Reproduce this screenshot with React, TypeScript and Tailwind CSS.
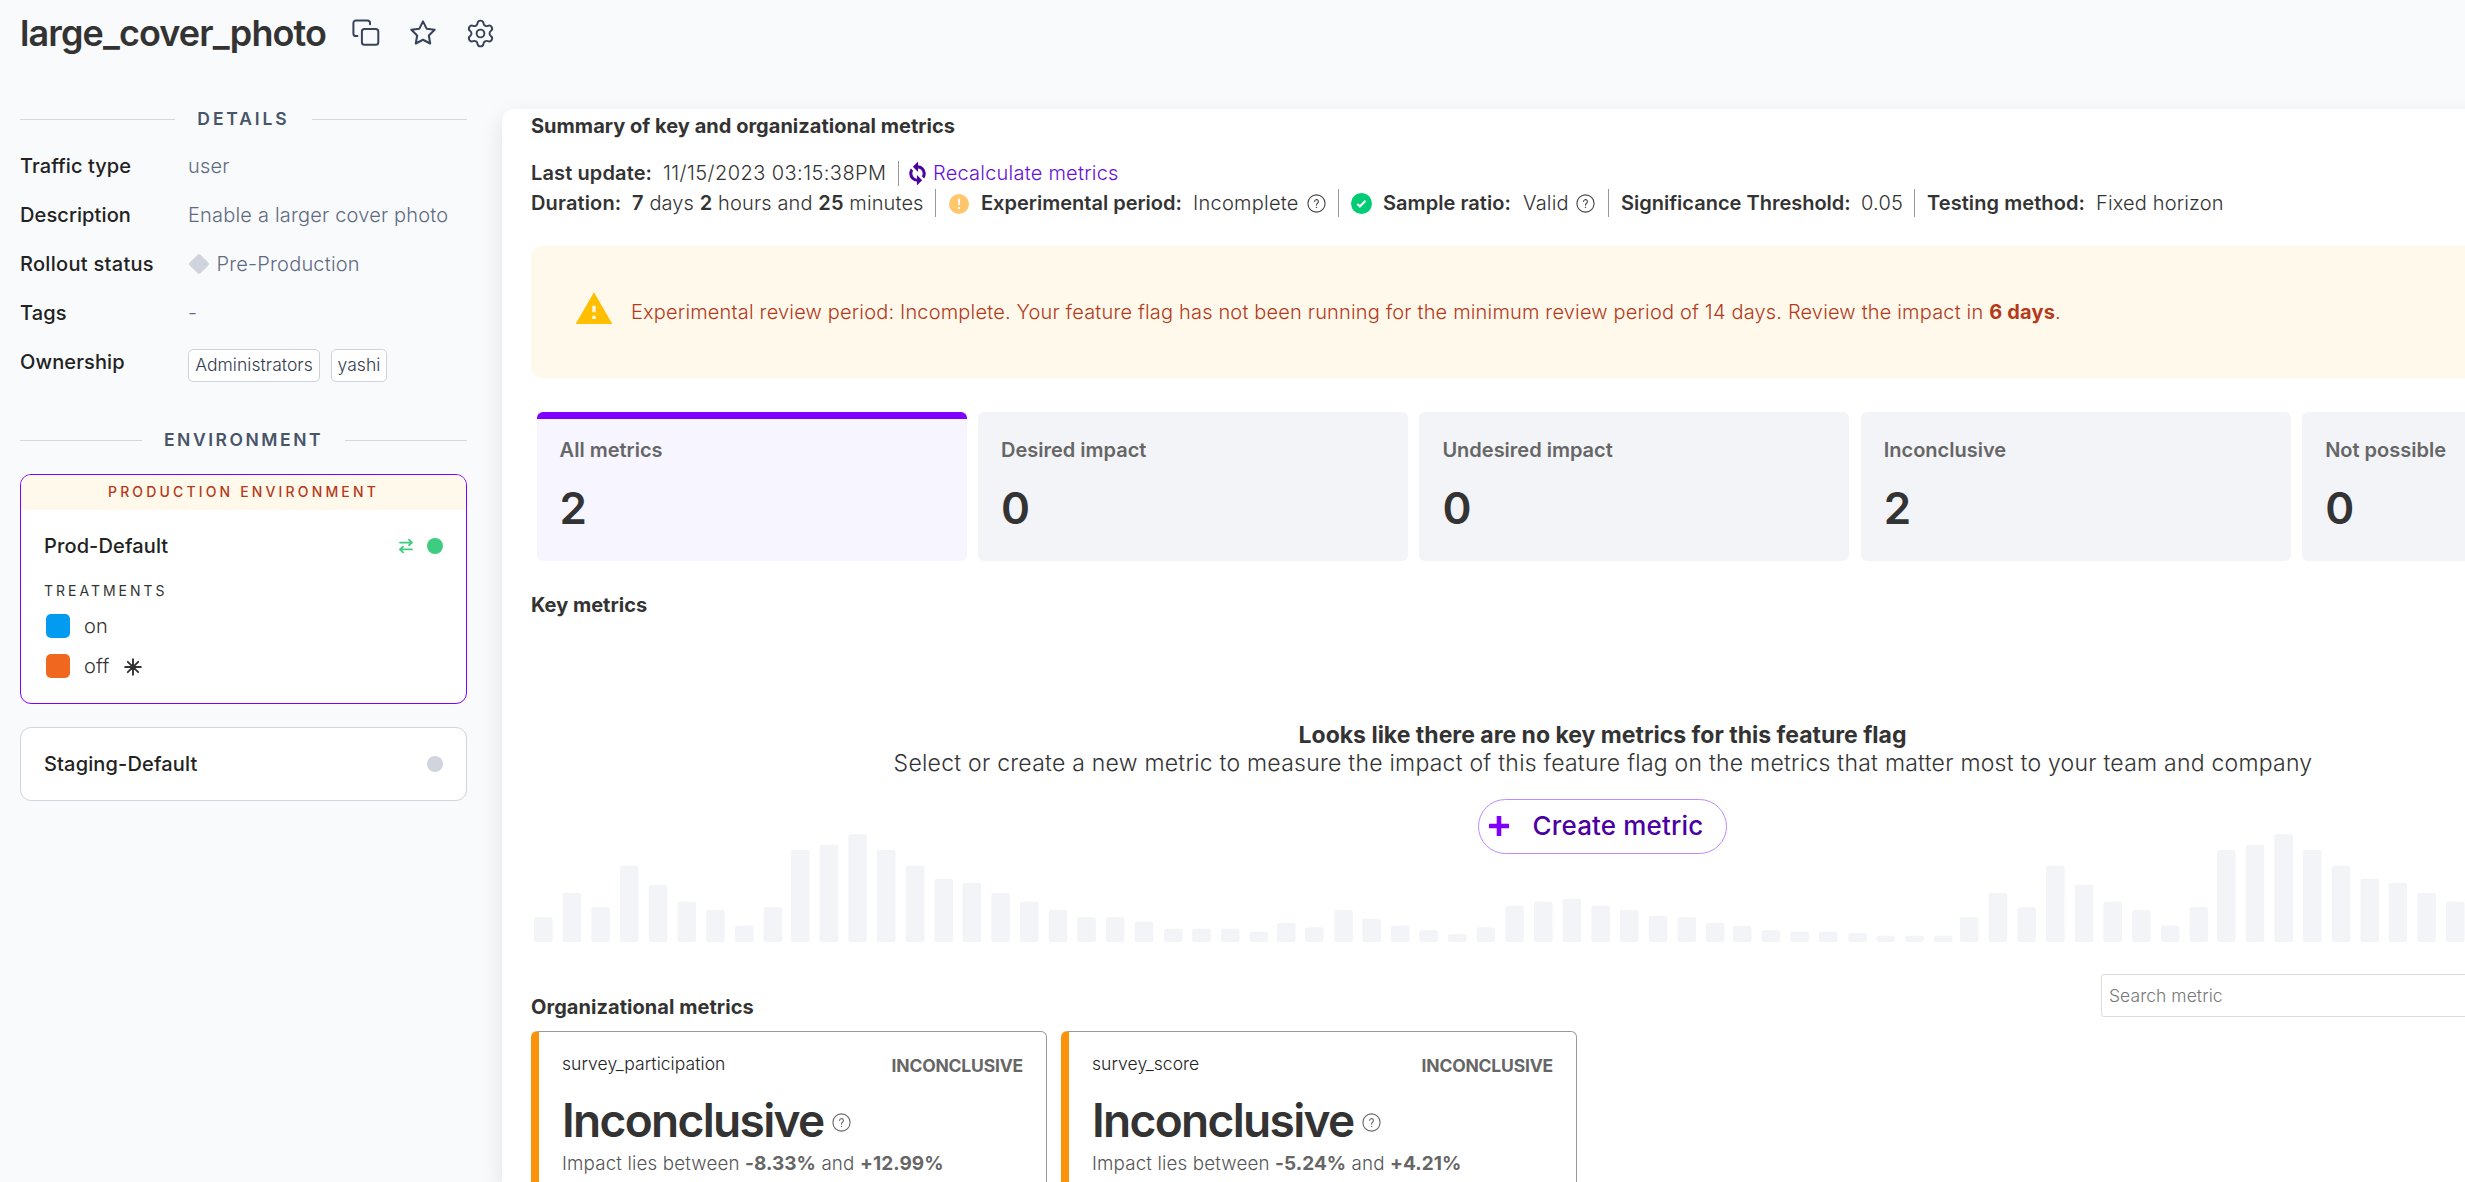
import React from "react";
import { Settings } from "lucide-react";
import { MdWarning } from "react-icons/md";

function CopyIcon() {
  return (
    <svg width="28" height="28" viewBox="0 0 28 28" fill="none" stroke="#36435a" strokeWidth="2" strokeLinecap="round" strokeLinejoin="round">
      <rect x="9.9" y="10" width="16.4" height="15.8" rx="2.6" />
      <path d="M18 5.3V4a2.6 2.6 0 0 0-2.6-2.6H4A2.6 2.6 0 0 0 1.4 4v10.4A2.6 2.6 0 0 0 4 17h1.4" />
    </svg>
  );
}

function StarIcon() {
  return (
    <svg width="28" height="28" viewBox="0 0 24 24" fill="none" stroke="#36435a" strokeWidth="1.75" strokeLinecap="round" strokeLinejoin="round">
      <path d="M12 2l3.09 6.26L22 9.27l-5 4.87 1.18 6.88L12 17.77l-6.18 3.25L7 14.14 2 9.27l6.91-1.01L12 2z" />
    </svg>
  );
}

function SyncIcon({ className }: { className: string }) {
  return (
    <svg className={className} width="23" height="23" viewBox="0 0 24 24" fill="#4a009c" stroke="#4a009c" strokeWidth="1.2">
      <path d="M12 4V1L8 5l4 4V6c3.31 0 6 2.69 6 6 0 1.01-.25 1.97-.7 2.8l1.46 1.46A7.93 7.93 0 0 0 20 12c0-4.42-3.58-8-8-8zm0 14c-3.31 0-6-2.69-6-6 0-1.01.25-1.97.7-2.8L5.24 7.74A7.93 7.93 0 0 0 4 12c0 4.42 3.58 8 8 8v3l4-4-4-4v3z" />
    </svg>
  );
}

function HelpIcon({ className }: { className: string }) {
  return (
    <svg className={className} width="19" height="19" viewBox="0 0 19 19" fill="none" stroke="currentColor" strokeWidth="1.1">
      <circle cx="9.5" cy="9.5" r="8.6" />
      <path d="M7.6 7.4a1.9 1.9 0 1 1 3.1 1.6c-.8.7-1.2 1.1-1.2 2.1" strokeLinecap="round" />
      <circle cx="9.5" cy="13.4" r=".7" fill="currentColor" stroke="none" />
    </svg>
  );
}

function AlertDot() {
  return (
    <svg width="20" height="20" viewBox="0 0 20 20">
      <circle cx="10" cy="10" r="10" fill="#ffc66b" />
      <path d="M8.9 4.8h2.2l-.3 6.4H9.2zM9 12.9h2V15H9z" fill="#fff" />
    </svg>
  );
}

function CheckDot() {
  return (
    <svg width="21" height="21" viewBox="0 0 21 21" fill="none">
      <circle cx="10.5" cy="10.5" r="10.5" fill="#00cc76" />
      <path d="M6.3 10.9l2.6 2.6 5.6-5.7" stroke="#fff" strokeWidth="2" />
    </svg>
  );
}

function SwapIcon() {
  return (
    <svg width="14" height="16" viewBox="0 0 14 16" fill="none" stroke="#3dcc80" strokeWidth="1.8" strokeLinecap="round" strokeLinejoin="round">
      <path d="M1 4.6h12M10 1.6l3 3-3 2.6M13 11.4H1M4 8.8l-3 2.6 3 3" />
    </svg>
  );
}

function AsteriskIcon() {
  return (
    <svg width="18" height="18" viewBox="0 0 18 18" fill="none" stroke="#333" strokeWidth="1.9" strokeLinecap="round">
      <path d="M9 1.2v15.6M1.2 9h15.6M3.8 3.8l10.4 10.4M14.2 3.8L3.8 14.2" />
      <circle cx="9" cy="9" r="2.6" fill="#333" stroke="none" />
    </svg>
  );
}

function SectionTitle({ children, className }: { children: React.ReactNode; className: string }) {
  return (
    <div className="flex h-6 items-center">
      <div className="h-px flex-1 bg-[#d5d8df]" />
      <h2 className={`px-[22px] text-[17.5px] font-semibold leading-6 text-[#475569] ${className}`}>{children}</h2>
      <div className="h-px flex-1 bg-[#d5d8df]" />
    </div>
  );
}

function DetailRow({ label, tracking, children }: { label: string; tracking: string; children: React.ReactNode }) {
  return (
    <div className="flex h-[49px] items-center text-[20px]">
      <div className={`w-[168px] font-medium text-[#222] ${tracking}`}>{label}</div>
      <div className="flex items-center font-light tracking-[0.19px] text-[#5f6b82]">{children}</div>
    </div>
  );
}

function Tag({ children, className }: { children: React.ReactNode; className: string }) {
  return (
    <span className={`flex h-[33px] items-center justify-center rounded-[5px] border border-[#cdd2dc] bg-white text-[17.5px] tracking-[0.05px] text-[#333b4d] ${className}`}>
      {children}
    </span>
  );
}

function Sidebar() {
  return (
    <aside className="flex w-[502px] shrink-0 flex-col pl-5 pr-[35px]">
      <div className="-mt-[2px]">
        <SectionTitle className="tracking-[2.88px]">DETAILS</SectionTitle>
      </div>
      <div className="mt-[10px]">
        <DetailRow label="Traffic type" tracking="tracking-[0.08px]">user</DetailRow>
        <DetailRow label="Description" tracking="tracking-[0.1px]">Enable a larger cover photo</DetailRow>
        <DetailRow label="Rollout status" tracking="tracking-[0.3px]">
          <svg className="mr-[6.5px]" width="22" height="22" viewBox="0 0 22 22">
            <rect x="3.4" y="3.4" width="15.2" height="15.2" rx="2.4" transform="rotate(45 11 11)" fill="#cfd3dc" />
          </svg>
          Pre-Production
        </DetailRow>
        <DetailRow label="Tags" tracking="tracking-[0.1px]">-</DetailRow>
        <DetailRow label="Ownership" tracking="tracking-[0.12px]">
          <span className="mt-2 flex gap-[11px]">
            <Tag className="w-[132px]">Administrators</Tag>
            <Tag className="w-[56px]">yashi</Tag>
          </span>
        </DetailRow>
      </div>
      <div className="mt-[42px]">
        <SectionTitle className="tracking-[2.54px]">ENVIRONMENT</SectionTitle>
      </div>
      <div className="mt-[22px] h-[230px] overflow-hidden rounded-[11px] border border-[#8000ff] bg-white">
        <div className="h-[35px] bg-[#fff9eb] text-center text-[14px] font-medium leading-[34px] tracking-[3.15px] text-[#b5391b]">PRODUCTION ENVIRONMENT</div>
        <div className="flex h-[72px] items-center pl-[23px] pr-[23px]">
          <span className="flex-1 text-[20px] font-medium tracking-[0.12px] text-[#222]">Prod-Default</span>
          <SwapIcon />
          <span className="ml-[14px] size-4 rounded-full bg-[#3dcc80]" />
        </div>
        <div className="-mt-px pl-[23px] text-[14px] leading-5 tracking-[3px] text-[#333]">TREATMENTS</div>
        <div className="mt-[5px] flex h-10 items-center pl-[25px] text-[20px] font-light tracking-[0.19px] text-[#333]">
          <span className="mr-[14px] size-6 rounded-[5px] bg-[#039bf0]" />
          on
        </div>
        <div className="flex h-10 items-center pl-[25px] text-[20px] font-light tracking-[0.19px] text-[#333]">
          <span className="mr-[14px] size-6 rounded-[5px] bg-[#f06820]" />
          off
          <span className="ml-[14px] mt-[2px]">
            <AsteriskIcon />
          </span>
        </div>
      </div>
      <div className="mt-[23px] flex h-[74px] items-center rounded-[11px] border border-[#d0d4dd] bg-white pl-[23px] pr-[23px]">
        <span className="flex-1 text-[20px] font-medium tracking-[0.15px] text-[#222]">Staging-Default</span>
        <span className="size-4 rounded-full bg-[#cfd4dd]" />
      </div>
    </aside>
  );
}

function Divider() {
  return <span className="h-[28px] w-px shrink-0 bg-[#999]" />;
}

function StatusRows() {
  return (
    <div className="mt-5 text-[20px] text-[#333]">
      <div className="flex h-[30px] items-center whitespace-nowrap">
        <span className="w-[132px] font-semibold tracking-[0.12px]">Last update:</span>
        <span className="w-[235px] font-light tracking-[0.43px]">11/15/2023 03:15:38PM</span>
        <span className="h-[25px] w-px bg-[#999]" />
        <a className="flex items-center font-light tracking-[0.23px] text-[#6610d8]">
          <SyncIcon className="ml-[7px] mr-[4px]" />
          Recalculate metrics
        </a>
      </div>
      <div className="-mt-px flex h-[31px] items-center whitespace-nowrap">
        <span className="w-[101px] font-semibold tracking-[0.15px]">Duration:</span>
        <span className="w-[303px] font-light tracking-[0.12px]">
          <b className="font-semibold">7</b> days <b className="font-semibold">2</b> hours and <b className="font-semibold">25</b> minutes
        </span>
        <Divider />
        <span className="ml-[13px] mt-[3px] w-[32px]">
          <AlertDot />
        </span>
        <span className="w-[212px] font-semibold">Experimental period:</span>
        <span className="w-[114px] font-light tracking-[0.25px]">Incomplete</span>
        <span className="mt-[2px] w-[31px]">
          <HelpIcon className="block text-[#444]" />
        </span>
        <Divider />
        <span className="ml-3 mt-[2px] w-8">
          <CheckDot />
        </span>
        <span className="w-[140px] font-semibold tracking-[0.05px]">Sample ratio:</span>
        <span className="w-[53px] font-light tracking-[0.2px]">Valid</span>
        <span className="mt-[2px] w-8">
          <HelpIcon className="block text-[#444]" />
        </span>
        <Divider />
        <span className="ml-[12px] w-[240px] font-semibold">Significance Threshold:</span>
        <span className="w-[53px] font-light tracking-[0.2px]">0.05</span>
        <Divider />
        <span className="ml-[12px] w-[169px] font-semibold tracking-[0.08px]">Testing method:</span>
        <span className="font-light tracking-[0.15px]">Fixed horizon</span>
      </div>
    </div>
  );
}

const stats = [
  { label: "All metrics", value: 2, active: true },
  { label: "Desired impact", value: 0 },
  { label: "Undesired impact", value: 0 },
  { label: "Inconclusive", value: 2 },
  { label: "Not possible", value: 0 },
];

function StatCards() {
  return (
    <div className="mt-[34px] flex gap-[11.4px] pl-[5.6px]">
      {stats.map((s) => (
        <div
          key={s.label}
          className={`flex h-[149px] w-[430px] shrink-0 flex-col overflow-hidden rounded-[6px] pl-[23px] ${
            s.active ? "border-t-[7px] border-[#8000ff] bg-[#f7f5ff] pt-[19px]" : "bg-[#f3f4f8] pt-[26px]"
          }`}
        >
          <span className="text-[20px] font-semibold leading-6 text-[#666]">{s.label}</span>
          <span className="mt-[21px] text-[44px] font-semibold leading-[50px] text-[#333]">{s.value}</span>
        </div>
      ))}
    </div>
  );
}

const barTops = [
  413, 340, 383, 258, 315, 366, 391, 438, 383, 211, 195, 164, 211, 258, 297, 310, 340, 366, 391, 413, 413, 426, 447, 447, 447, 456, 430, 443, 391,
  417, 438, 452, 464, 443, 378, 366, 357, 378, 391, 408, 413, 430, 439, 452, 456, 456, 460, 468, 468, 468,
];
const barOffsets = [
  0, 28.7, 57.4, 86, 114.8, 143.5, 172.2, 201, 229.6, 257, 285.7, 314.4, 343, 371.8, 400.5, 428.6, 457.3, 486, 514.7, 543.4, 572, 600.8, 630, 658.2,
  687, 715.6, 743, 771, 800.4, 828.4, 857, 885.2, 914, 942.6, 971.3, 1000, 1028.7, 1057.4, 1086, 1114.8, 1143.5, 1172, 1199, 1227.7, 1256.4, 1285,
  1314.4, 1342.5, 1371.2, 1400,
];

function BarPattern() {
  const bars = Array.from({ length: 75 }, (_, i) => ({
    x: 3 + barOffsets[i % 50] + Math.floor(i / 50) * 1426,
    h: (487 - barTops[i % 50]) / 3,
  }));
  return (
    <svg className="absolute bottom-0 left-0" width="2142" height="110" viewBox="0 0 2142 110" fill="#f3f4f8">
      {bars.map((b, i) => (
        <rect key={i} x={b.x} y={110 - b.h} width="18.5" height={b.h} rx="2" />
      ))}
    </svg>
  );
}

function KeyMetrics() {
  return (
    <section className="mt-8">
      <h3 className="text-[20px] font-bold leading-6 text-[#333]">Key metrics</h3>
      <div className="relative h-[325px]">
        <BarPattern />
        <div className="relative flex flex-col items-center pt-[104px] text-[23px] leading-7 text-[#333]">
          <p className="pl-px font-bold">Looks like there are no key metrics for this feature flag</p>
          <p className="pl-[2px] font-light tracking-[0.24px]">
            Select or create a new metric to measure the impact of this feature flag on the metrics that matter most to your team and company
          </p>
          <button className="mt-[22px] flex h-[55px] w-[249px] items-center rounded-full border border-[#bd8bff] bg-white pb-px pl-[10px] text-[26px] font-medium tracking-[0.16px] text-[#4b00a3]">
            <svg className="mr-[24px]" width="20" height="20" viewBox="0 0 20 20" fill="#8000ff">
              <path d="M7.7 0h4.6v7.7H20v4.6h-7.7V20H7.7v-7.7H0V7.7h7.7z" />
            </svg>
            Create metric
          </button>
        </div>
      </div>
    </section>
  );
}

function MetricCard({ name, low, high }: { name: string; low: string; high: string }) {
  return (
    <div className="h-[260px] w-[516px] rounded-[6px] border border-l-8 border-[#999] border-l-[#fa930a] pl-[23px] pr-[23px] pt-[21px]">
      <div className="flex justify-between text-[17.5px] leading-[22px]">
        <span className="font-light tracking-[0.06px] text-[#222]">{name}</span>
        <span className="mt-[2px] font-bold tracking-[-0.19px] text-[#666]">INCONCLUSIVE</span>
      </div>
      <div className="mt-[17px] flex items-center">
        <span className="text-[46px] font-semibold leading-[52px] tracking-[-1.66px] text-[#333]">Inconclusive</span>
        <HelpIcon className="ml-[8px] mt-1 text-[#666]" />
      </div>
      <div className="mt-[6px] whitespace-nowrap text-[18.75px] font-light leading-6 tracking-[0.15px] text-[#555]">
        Impact lies between <b className="text-[19px] font-bold tracking-[0.05px] text-[#666]">{low}</b> and{" "}
        <b className="text-[19px] font-bold tracking-[0.08px] text-[#666]">{high}</b>
      </div>
    </div>
  );
}

function OrganizationalMetrics() {
  return (
    <section className="mt-8">
      <div className="flex h-[57px] items-start justify-between">
        <h3 className="mt-[21px] text-[20px] font-bold leading-6 tracking-[0.05px] text-[#333]">Organizational metrics</h3>
        <div className="flex h-[43px] w-[572px] items-center rounded-[3px] border border-[#dcdcdc] bg-white pl-[7px] pt-[2px] text-[17.5px] font-light tracking-[0.05px] text-[#777]">
          Search metric
        </div>
      </div>
      <div className="flex gap-[14px]">
        <MetricCard name="survey_participation" low="-8.33%" high="+12.99%" />
        <MetricCard name="survey_score" low="-5.24%" high="+4.21%" />
      </div>
    </section>
  );
}

export default function App() {
  return (
    <div className="flex h-[1182px] w-[2465px] flex-col overflow-hidden bg-[#f9fafc] font-['Inter',sans-serif]">
      <header className="flex h-[109px] shrink-0 items-start pl-5">
        <h1 className="mt-[9px] w-[332px] whitespace-nowrap text-[36px] font-semibold leading-[48px] tracking-[-0.9px] text-[#333]">large_cover_photo</h1>
        <div className="mt-[17px] flex h-8 items-center">
          <CopyIcon />
          <span className="ml-[29px]">
            <StarIcon />
          </span>
          <Settings size={31} strokeWidth={1.5} className="ml-[28px] text-[#36435a]" />
        </div>
      </header>
      <div className="flex min-h-0 flex-1">
        <Sidebar />
        <main className="w-[2200px] shrink-0 rounded-tl-[12px] bg-white pl-[29px] pr-[29px] pt-[5px] shadow-[0_8px_22px_rgba(15,23,42,0.11)]">
          <h3 className="text-[20px] font-bold leading-6 tracking-[0.02px] text-[#333]">Summary of key and organizational metrics</h3>
          <StatusRows />
          <div className="mt-[28px] flex h-[132px] items-center rounded-[10px] bg-[#fff9eb] pl-[43px] text-[20px] font-light tracking-[0.17px] text-[#b5391b]">
            <MdWarning size={40} className="mb-[7px] mr-[17px] shrink-0 text-[#ffbf00]" />
            <p>
              Experimental review period: Incomplete. Your feature flag has not been running for the minimum review period of 14 days. Review the impact in{" "}
              <b className="font-bold">6 days</b>.
            </p>
          </div>
          <StatCards />
          <KeyMetrics />
          <OrganizationalMetrics />
        </main>
      </div>
    </div>
  );
}
